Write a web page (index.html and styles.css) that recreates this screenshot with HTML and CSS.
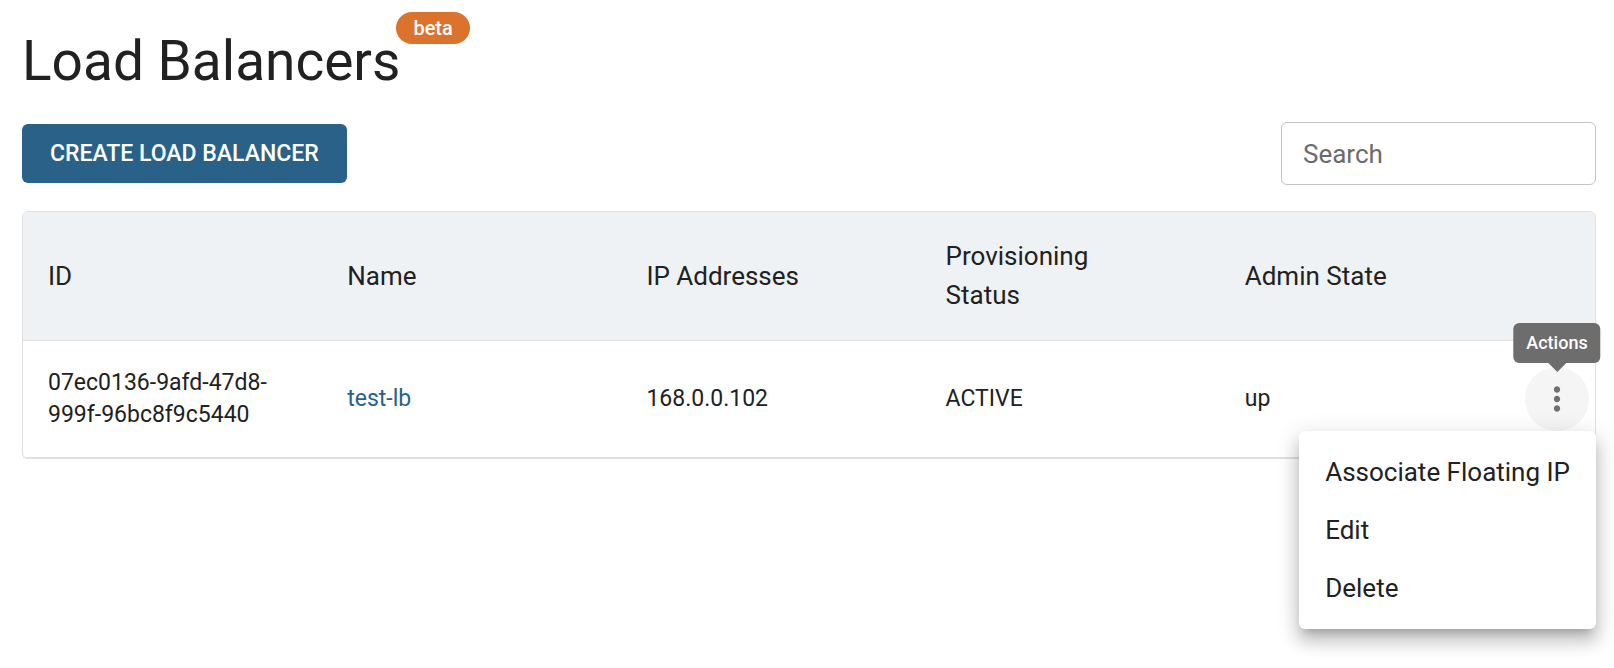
FILE: index.html
```
<!DOCTYPE html>
<html lang="en">
<head>
    <meta charset="UTF-8">
    <meta name="viewport" content="width=device-width, initial-scale=1.0">
    <title>Load Balancers</title>
    <link rel="stylesheet" href="styles.css">
</head>
<body>
    <main class="page">
        <h1 class="title">Load Balancers<span class="badge">beta</span></h1>

        <div class="toolbar">
            <button class="create-button" type="button">CREATE LOAD BALANCER</button>
            <input class="search" type="search" placeholder="Search" aria-label="Search">
        </div>

        <table class="table">
            <thead>
                <tr>
                    <th>ID</th>
                    <th>Name</th>
                    <th>IP Addresses</th>
                    <th>Provisioning Status</th>
                    <th>Admin State</th>
                    <th class="actions-col"></th>
                </tr>
            </thead>
            <tbody>
                <tr>
                    <td>07ec0136-9afd-47d8-999f-96bc8f9c5440</td>
                    <td><a href="#">test-lb</a></td>
                    <td>168.0.0.102</td>
                    <td>ACTIVE</td>
                    <td>up</td>
                    <td class="actions-col">
                        <div class="actions">
                            <button class="icon-button" type="button" aria-label="Actions" aria-haspopup="menu" aria-expanded="true">
                                <svg viewBox="0 0 24 24" width="38" height="38" fill="currentColor">
                                    <path d="M12 8c1.1 0 2-.9 2-2s-.9-2-2-2-2 .9-2 2 .9 2 2 2zm0 2c-1.1 0-2 .9-2 2s.9 2 2 2 2-.9 2-2-.9-2-2-2zm0 6c-1.1 0-2 .9-2 2s.9 2 2 2 2-.9 2-2-.9-2-2-2z"/>
                                </svg>
                            </button>
                            <div class="tooltip" role="tooltip">Actions</div>
                            <div class="menu" role="menu">
                                <button type="button" role="menuitem">Associate Floating IP</button>
                                <button type="button" role="menuitem">Edit</button>
                                <button type="button" role="menuitem">Delete</button>
                            </div>
                        </div>
                    </td>
                </tr>
            </tbody>
        </table>
    </main>
</body>
</html>
```
FILE: styles.css
```
* {
    box-sizing: border-box;
}
body {
    margin: 0;
    font-family: Roboto, "Liberation Sans", sans-serif;
    font-size: 26px;
    color: #212121;
    background-color: #fff;
}
button, input {
    font-family: inherit;
}
.page {
    min-height: 100vh;
    padding: 27px 18px 40px 22px;
}
.title {
    position: relative;
    width: fit-content;
    margin: 0 0 27px;
    font-size: 55px;
    font-weight: 400;
    line-height: 68px;
}
.badge {
    position: absolute;
    top: -15px;
    left: 100%;
    margin-left: -4px;
    padding: 0 17px;
    border-radius: 16px;
    background-color: #dc732d;
    color: #fff;
    font-size: 20px;
    font-weight: 500;
    line-height: 32px;
}
.toolbar {
    display: flex;
    align-items: center;
    justify-content: space-between;
    margin-bottom: 26px;
}
.create-button {
    height: 59px;
    padding: 0 28px;
    border: none;
    border-radius: 6px;
    background-color: #296188;
    color: #fff;
    font-size: 23px;
    font-weight: 500;
    cursor: pointer;
}
.search {
    width: 315px;
    height: 63px;
    padding: 0 21px;
    border: 1px solid #c4c4c4;
    border-radius: 6px;
    background-color: #fff;
    color: inherit;
    font-size: 26px;
}
.search::placeholder {
    color: #6b6b6b;
    opacity: 1;
}
.table {
    width: 100%;
    table-layout: fixed;
    border: 1px solid #e0e0e0;
    border-radius: 6px;
    border-spacing: 0;
}
.table th, .table td {
    padding: 26px 25px;
    border-bottom: 1px solid #e0e0e0;
    text-align: left;
    vertical-align: middle;
}
.table th {
    padding: 25px 56px 25px 25px;
    background-color: #eef2f5;
    font-size: 26px;
    font-weight: 400;
    line-height: 39px;
}
.table th:first-child {
    border-top-left-radius: 5px;
}
.table th:last-child {
    border-top-right-radius: 5px;
}
.table td {
    font-size: 23px;
    line-height: 32px;
}
.table a {
    color: #296188;
    text-decoration: none;
}
.table .actions-col {
    width: 76px;
    padding: 0;
}
.actions {
    position: relative;
    width: 64px;
    margin: 0 auto;
}
.icon-button {
    display: flex;
    align-items: center;
    justify-content: center;
    width: 64px;
    height: 64px;
    padding: 0;
    border: none;
    border-radius: 50%;
    background-color: #f5f5f5;
    color: #6f6f6f;
    cursor: pointer;
}
.tooltip {
    position: absolute;
    bottom: calc(100% + 4px);
    left: 50%;
    transform: translateX(-50%);
    padding: 0 13px;
    border-radius: 6px;
    background-color: #6d6d6d;
    color: #fff;
    font-size: 18px;
    font-weight: 500;
    line-height: 40px;
}
.tooltip::after {
    content: "";
    position: absolute;
    top: 100%;
    left: 50%;
    margin-left: -9px;
    border: 9px solid transparent;
    border-top-color: #6d6d6d;
    border-bottom: none;
}
.menu {
    position: absolute;
    top: 100%;
    right: -7px;
    padding: 12px 0;
    border-radius: 6px;
    background-color: #fff;
    box-shadow: 0 8px 8px -5px rgba(0, 0, 0, 0.2),
        0 13px 16px 2px rgba(0, 0, 0, 0.14),
        0 5px 22px 3px rgba(0, 0, 0, 0.12);
}
.menu button {
    display: block;
    width: 100%;
    height: 58px;
    padding: 0 26px;
    border: none;
    background: none;
    color: inherit;
    font-size: 26px;
    text-align: left;
    white-space: nowrap;
    cursor: pointer;
}
.menu button:hover {
    background-color: #f5f5f5;
}
```
